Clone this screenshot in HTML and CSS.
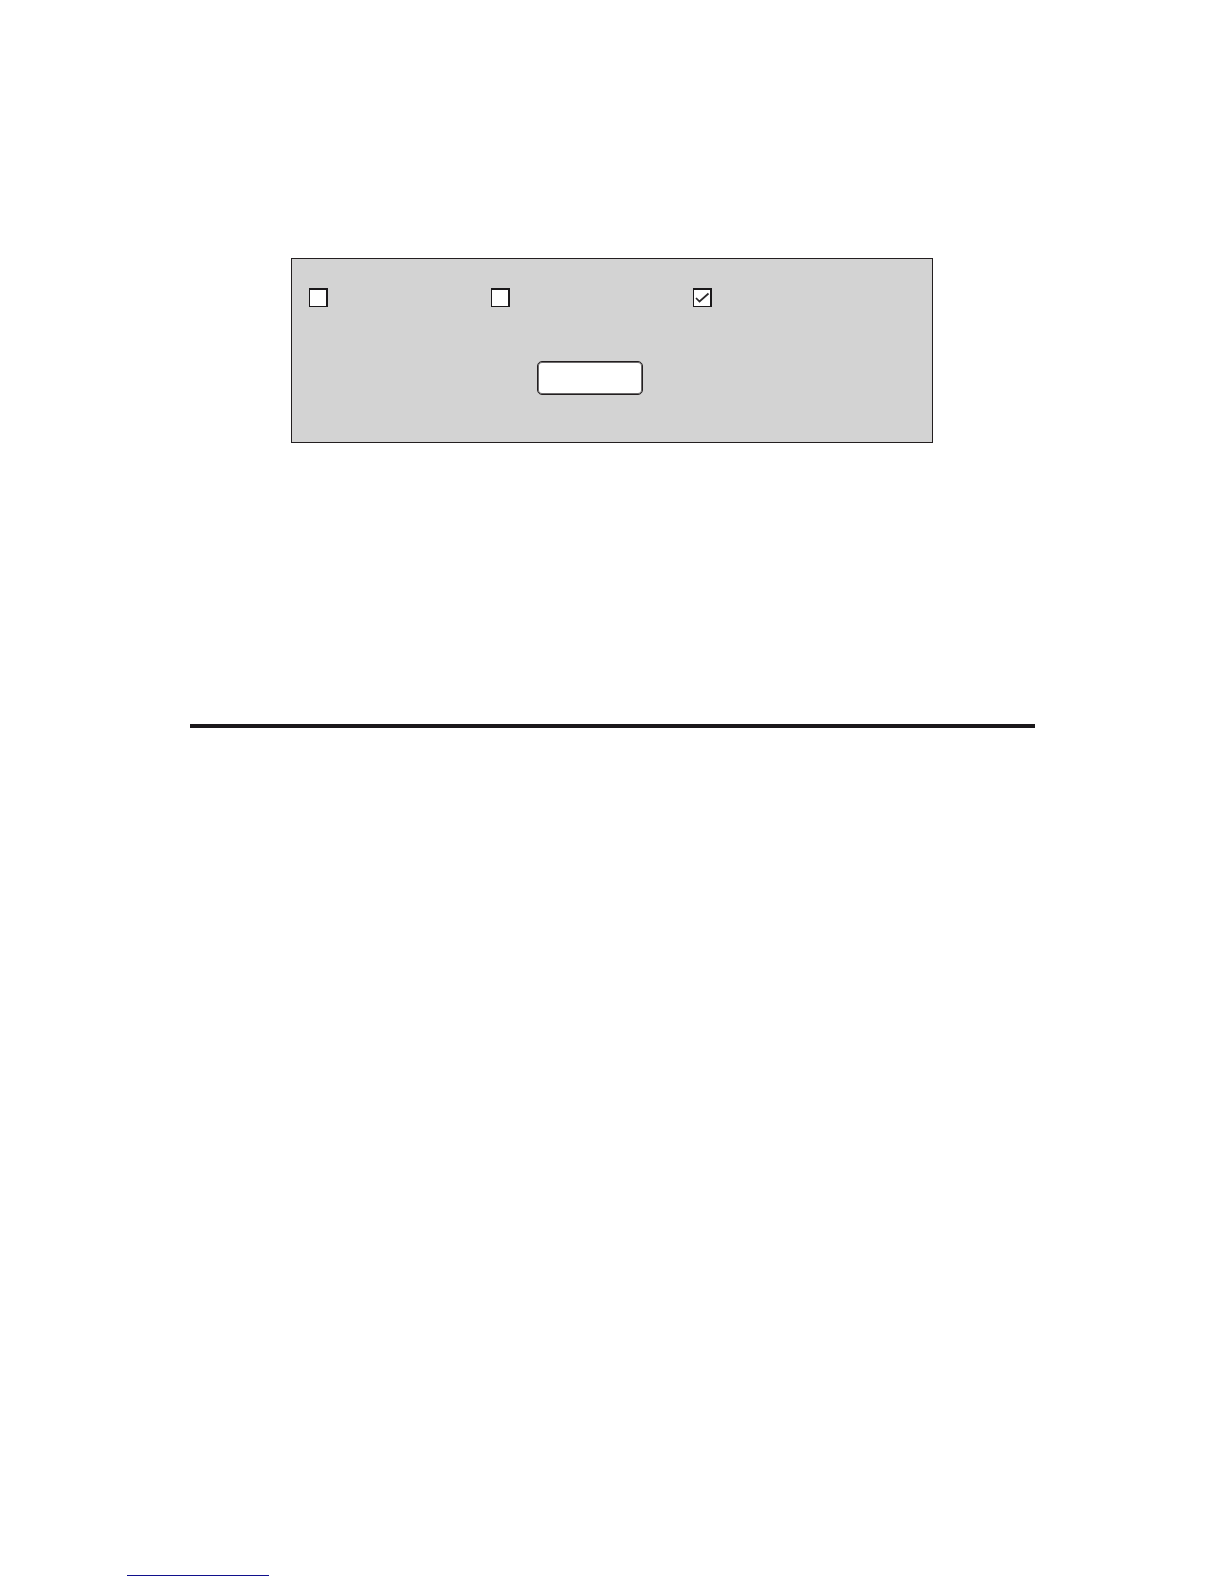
FILE: index.html
```html
<!DOCTYPE html>
<html lang="en">
<head>
<meta charset="utf-8">
<meta name="viewport" content="width=device-width, initial-scale=1">
<link rel="stylesheet" href="styles.css">
</head>
<body>
<main class="content">
  <form class="panel">
    <div class="options">
      <label class="option"><input class="box" type="checkbox" aria-label="Option 1"></label>
      <label class="option"><input class="box" type="checkbox" aria-label="Option 2"></label>
      <label class="option">
        <input class="box" type="checkbox" aria-label="Option 3" checked>
        <svg class="tick" viewBox="0 0 19 19" aria-hidden="true"><path d="M3 10 L6.5 13.5 L15.5 5.5"/></svg>
      </label>
    </div>
    <button class="action" type="button" aria-label="Action"></button>
  </form>
  <hr class="rule">
</main>
<footer class="footer"><a class="footer-link" href="#" aria-label="Source"></a></footer>
</body>
</html>
```
FILE: styles.css
```css
* {
  box-sizing: border-box;
}

body {
  margin: 0;
  min-height: 100vh;
  display: flex;
  flex-direction: column;
  background: #fff;
  font-family: "Liberation Sans", Arial, sans-serif;
}

.content {
  flex: 1;
  padding: 258px 189px 0 190px;
}

.panel {
  margin: 0 102px 0 101px;
  padding: 29px 0 47px 17px;
  border: 1px solid #231f20;
  background: #d3d3d3;
}

.options {
  display: grid;
  grid-template-columns: 182fr 202fr 239fr;
}

.option {
  display: grid;
  width: 19px;
  height: 19px;
}

.box,
.tick {
  grid-area: 1 / 1;
  width: 19px;
  height: 19px;
  margin: 0;
}

.box {
  appearance: none;
  border: solid #1a181a;
  border-width: 2px 2px 1px 1px;
  background: #fff;
}

.tick {
  visibility: hidden;
  pointer-events: none;
  fill: none;
  stroke: #2b292b;
  stroke-width: 1.7;
}

.box:checked + .tick {
  visibility: visible;
}

.action {
  display: block;
  width: 106px;
  height: 34px;
  margin: 54px auto 0 228px;
  padding: 0;
  border: 1px solid #231f20;
  border-radius: 5px;
  box-shadow: inset 0 0 0 1px #6c6a6b;
  background: #fff;
}

.rule {
  height: 4px;
  margin: 281px 0 0;
  border: 0;
  background: #1a181a;
}

.footer {
  display: flex;
  padding: 0 0 8px 127px;
}

.footer-link {
  width: 142px;
  border-bottom: 1px solid #10108c;
}
```
